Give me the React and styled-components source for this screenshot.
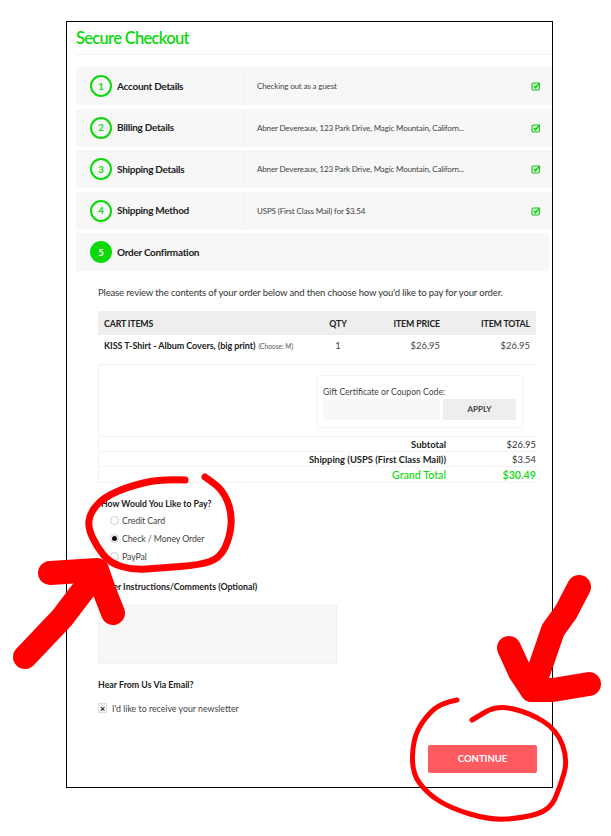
import React from "react";
import styled, { createGlobalStyle } from "styled-components";

const Global = createGlobalStyle`
  html, body { margin: 0; padding: 0; background: #fff; }
  body { font-family: "Lato", "Noto Sans", sans-serif; color: #444; }
`;

const GREEN = "#0cd80c";

const Page = styled.div`
  position: relative;
  width: 611px;
  height: 836px;
  overflow: hidden;
  padding: 21px 0 0 66px;
  box-sizing: border-box;
`;
const Frame = styled.main`
  width: 487px;
  height: 767px;
  box-sizing: border-box;
  border: 1px solid #000;
  padding: 0 0 0 9px;
`;
const Title = styled.h1`
  margin: 0 0 12px;
  height: 32px;
  border-bottom: 1px solid #f2f2f2;
  font-size: 16.5px;
  letter-spacing: -0.7px;
  line-height: 32px;
  font-weight: 600;
  color: ${GREEN};
`;
const Steps = styled.div`
  display: flex;
  flex-direction: column;
  gap: 3.6px;
`;
const Step = styled.section`
  display: flex;
  align-items: center;
  height: 38px;
  background: #f7f7f7;
  margin-right: ${(p) => (p.$open ? "3px" : "0")};
`;
const StepHead = styled.div`
  display: flex;
  align-items: center;
  gap: 5px;
  width: 168px;
  height: 100%;
  box-sizing: border-box;
  padding-left: 14px;
  border-right: ${(p) => (p.$open ? "0" : "1px solid #f2f2f2")};
`;
const Num = styled.span`
  width: 22px;
  height: 22px;
  box-sizing: border-box;
  border-radius: 50%;
  border: 2px solid ${GREEN};
  background: ${(p) => (p.$open ? GREEN : "transparent")};
  color: ${(p) => (p.$open ? "#fff" : GREEN)};
  display: flex;
  align-items: center;
  justify-content: center;
  font-size: 9.5px;
  font-weight: 700;
`;
const StepName = styled.span`
  font-size: 10px;
  letter-spacing: -0.28px;
  font-weight: 700;
  color: #222;
  padding-bottom: 1px;
`;
const StepInfo = styled.div`
  flex: 1;
  padding-left: 13px;
  font-size: 8px;
  letter-spacing: -0.15px;
  color: #444;
`;
const Tick = styled.svg`
  width: 10px;
  height: 10px;
  margin-right: 11px;
`;
const Body = styled.div`
  padding: 0 15px 0 22px;
`;
const Intro = styled.p`
  margin: 15px 0 12px;
  font-size: 9.5px;
  letter-spacing: -0.14px;
  line-height: 13px;
  color: #333;
`;
const CartTable = styled.table`
  width: 438px;
  border-collapse: collapse;
  table-layout: fixed;
`;
const HeadCell = styled.th`
  height: 24px;
  padding: 0 6px;
  background: #eee;
  font-size: 8.8px;
  letter-spacing: -0.15px;
  font-weight: 700;
  color: #222;
  text-align: ${(p) => p.$align || "left"};
`;
const Cell = styled.td`
  height: 29px;
  padding: 0 6px 8px;
  box-sizing: border-box;
  font-size: 9.4px;
  color: #444;
  border-bottom: 1px solid #f2f2f2;
  text-align: ${(p) => p.$align || "left"};
`;
const ItemName = styled.b`
  color: #222;
  font-size: 9px;
  letter-spacing: -0.06px;
`;
const Small = styled.small`
  font-size: 6.6px;
  color: #555;
  margin-left: 3px;
`;
const CouponRow = styled.div`
  height: 72px;
  box-sizing: border-box;
  border-bottom: 1px solid #f2f2f2;
  border-left: 1px solid #f2f2f2;
  padding: 10px 0 0 218px;
`;
const CouponBox = styled.div`
  width: 206px;
  height: 53px;
  box-sizing: border-box;
  border: 1px solid #f4f4f4;
  padding: 9px 5px 0;
`;
const CouponLabel = styled.div`
  font-size: 8.6px;
  line-height: 14px;
  color: #444;
`;
const CouponFields = styled.div`
  display: flex;
  gap: 3px;
`;
const CouponInput = styled.div`
  width: 117px;
  height: 21px;
  background: #f8f8f8;
  border-radius: 2px;
`;
const Apply = styled.button`
  width: 73px;
  height: 21px;
  padding: 0;
  border: 0;
  border-radius: 2px;
  background: #eee;
  font: 700 8px "Lato", sans-serif;
  color: #444;
`;
const TotalRow = styled.div`
  display: grid;
  grid-template-columns: 347px 90px;
  align-items: center;
  height: 15.3px;
  box-sizing: border-box;
  font-size: ${(p) => (p.$grand ? "10.7px" : "9.4px")};
  font-weight: ${(p) => (p.$grand ? 600 : 400)};
  color: ${(p) => (p.$grand ? GREEN : "#333")};
  border-bottom: 1px solid #f2f2f2;
  border-left: 1px solid #f2f2f2;
  text-align: right;
`;
const TotalLabel = styled.span`
  font-weight: ${(p) => (p.$grand ? 500 : 700)};
  color: ${(p) => (p.$grand ? GREEN : "#222")};
`;
const SectionLabel = styled.div`
  font-size: ${(p) => p.$size || 8.8}px;
  line-height: 12px;
  font-weight: 700;
  color: #222;
  margin-left: ${(p) => p.$indent || 0}px;
`;
const PayBlock = styled.div`
  margin-top: 15px;
`;
const PayOptions = styled.div`
  display: flex;
  flex-direction: column;
  gap: 6.3px;
  margin: 4.5px 0 0 12px;
`;
const PayOption = styled.label`
  display: flex;
  align-items: center;
  gap: 3px;
  height: 12px;
  font-size: 8.8px;
  letter-spacing: -0.1px;
  color: #444;
`;
const Radio = styled.span`
  width: 9px;
  height: 9px;
  box-sizing: border-box;
  border-radius: 50%;
  border: 1px solid #ccc;
  background: #fff;
  display: flex;
  align-items: center;
  justify-content: center;
  &::after {
    content: "";
    display: ${(p) => (p.$on ? "block" : "none")};
    width: 5px;
    height: 5px;
    border-radius: 50%;
    background: #111;
  }
`;
const Comments = styled.div`
  margin-top: 18px;
`;
const CommentBox = styled.div`
  width: 239px;
  height: 60px;
  margin-top: 11px;
  background: #f7f7f7;
  border: 1px solid #f2f2f2;
  box-sizing: border-box;
`;
const NewsBlock = styled.div`
  margin-top: 15px;
`;
const NewsOption = styled.label`
  display: flex;
  align-items: center;
  gap: 5px;
  margin-top: 12px;
  font-size: 8.8px;
  color: #444;
`;
const CheckBox = styled.span`
  width: 9px;
  height: 10px;
  box-sizing: border-box;
  border: 1px solid #ddd;
  background: #f6f6f6;
  display: flex;
  align-items: center;
  justify-content: center;
  font-size: 9px;
  font-weight: 700;
  line-height: 1;
  color: #111;
`;
const Actions = styled.div`
  display: flex;
  justify-content: flex-end;
  margin-top: 31px;
`;
const Continue = styled.button`
  width: 109px;
  height: 28px;
  border: 0;
  border-radius: 2px;
  padding: 0;
  background: #ff5a5f;
  color: #fff;
  font: 700 9.5px "Lato", sans-serif;
`;
const Scribble = styled.svg`
  position: absolute;
  inset: 0;
  width: 611px;
  height: 836px;
  pointer-events: none;
`;
const Stroke = styled.path`
  fill: none;
  stroke: #ff0000;
  stroke-width: ${(p) => p.$w}px;
  stroke-linecap: round;
  stroke-linejoin: round;
`;

const smooth = (pts) => {
  let d = `M${pts[0][0]} ${pts[0][1]}`;
  for (let i = 1; i < pts.length - 1; i++) {
    const mx = (pts[i][0] + pts[i + 1][0]) / 2;
    const my = (pts[i][1] + pts[i + 1][1]) / 2;
    d += ` Q${pts[i][0]} ${pts[i][1]} ${mx} ${my}`;
  }
  const l = pts[pts.length - 1];
  return d + ` L${l[0]} ${l[1]}`;
};

const payLoop = [[185,480],[160,479],[127,487],[103,498],[90,513],[88,528],[97,547],[110,563],[133,570],[160,568],[200,565],[220,558],[230,537],[232,513],[223,490],[205,477]];
const btnLoop = [[457,700],[440,703],[423,720],[413,740],[412,773],[427,793],[450,808],[490,820],[523,818],[550,810],[560,787],[568,760],[557,730],[530,713],[497,705],[472,720]];

const steps = [
  ["Account Details", "Checking out as a guest"],
  ["Billing Details", "Abner Devereaux, 123 Park Drive, Magic Mountain, Californ..."],
  ["Shipping Details", "Abner Devereaux, 123 Park Drive, Magic Mountain, Californ..."],
  ["Shipping Method", "USPS (First Class Mail) for $3.54"],
];

const DoneIcon = () => (
  <Tick viewBox="0 0 10 10" aria-hidden="true">
    <rect x="1" y="2" width="7.4" height="7" rx="1.2" fill="#d9f7d9" stroke="#2fb52f" strokeWidth="1.1" />
    <path d="M2.8 5 L4.4 6.7 L8.8 1.8" fill="none" stroke="#0cd80c" strokeWidth="1.6" />
  </Tick>
);

export default function App() {
  return (
    <Page>
      <Global />
      <Frame>
        <Title>Secure Checkout</Title>
        <Steps>
          {steps.map(([name, info], i) => (
            <Step key={name}>
              <StepHead>
                <Num>{i + 1}</Num>
                <StepName>{name}</StepName>
              </StepHead>
              <StepInfo>{info}</StepInfo>
              <DoneIcon />
            </Step>
          ))}
          <Step $open>
            <StepHead $open>
              <Num $open>5</Num>
              <StepName>Order Confirmation</StepName>
            </StepHead>
          </Step>
        </Steps>
        <Body>
          <Intro>Please review the contents of your order below and then choose how you'd like to pay for your order.</Intro>
          <CartTable>
            <colgroup>
              <col style={{ width: 217 }} />
              <col style={{ width: 46 }} />
              <col style={{ width: 85 }} />
              <col style={{ width: 90 }} />
            </colgroup>
            <thead>
              <tr>
                <HeadCell>CART ITEMS</HeadCell>
                <HeadCell $align="center">QTY</HeadCell>
                <HeadCell $align="right">ITEM PRICE</HeadCell>
                <HeadCell $align="right">ITEM TOTAL</HeadCell>
              </tr>
            </thead>
            <tbody>
              <tr>
                <Cell><ItemName>KISS T-Shirt - Album Covers, (big print)</ItemName><Small>(Choose: M)</Small></Cell>
                <Cell $align="center">1</Cell>
                <Cell $align="right">$26.95</Cell>
                <Cell $align="right">$26.95</Cell>
              </tr>
            </tbody>
          </CartTable>
          <CouponRow>
            <CouponBox>
              <CouponLabel>Gift Certificate or Coupon Code:</CouponLabel>
              <CouponFields>
                <CouponInput />
                <Apply>APPLY</Apply>
              </CouponFields>
            </CouponBox>
          </CouponRow>
          <TotalRow><TotalLabel>Subtotal</TotalLabel><span>$26.95</span></TotalRow>
          <TotalRow><TotalLabel>Shipping (USPS (First Class Mail))</TotalLabel><span>$3.54</span></TotalRow>
          <TotalRow $grand><TotalLabel $grand>Grand Total</TotalLabel><span>$30.49</span></TotalRow>
          <PayBlock>
            <SectionLabel $indent={3} $size={8.7}>How Would You Like to Pay?</SectionLabel>
            <PayOptions>
              <PayOption><Radio />Credit Card</PayOption>
              <PayOption><Radio $on />Check / Money Order</PayOption>
              <PayOption><Radio />PayPal</PayOption>
            </PayOptions>
          </PayBlock>
          <Comments>
            <SectionLabel>Order Instructions/Comments (Optional)</SectionLabel>
            <CommentBox />
          </Comments>
          <NewsBlock>
            <SectionLabel>Hear From Us Via Email?</SectionLabel>
            <NewsOption><CheckBox>×</CheckBox>I'd like to receive your newsletter</NewsOption>
          </NewsBlock>
          <Actions><Continue>CONTINUE</Continue></Actions>
        </Body>
      </Frame>
      <Scribble viewBox="0 0 611 836" aria-hidden="true">
        <Stroke $w={7} d={smooth(payLoop)} />
        <Stroke $w={5} d={smooth(btnLoop)} />
        <Stroke $w={24} d="M25 657 L62 618 L97 572" />
        <Stroke $w={24} d="M50 573 L97 570 L104 590 L113 613" />
        <Stroke $w={24} d="M579 587 L566 612 L553 630 L542 662 L532 690" />
        <Stroke $w={24} d="M509 648 L520 672 L532 690 L553 690 L589 684" />
      </Scribble>
    </Page>
  );
}
